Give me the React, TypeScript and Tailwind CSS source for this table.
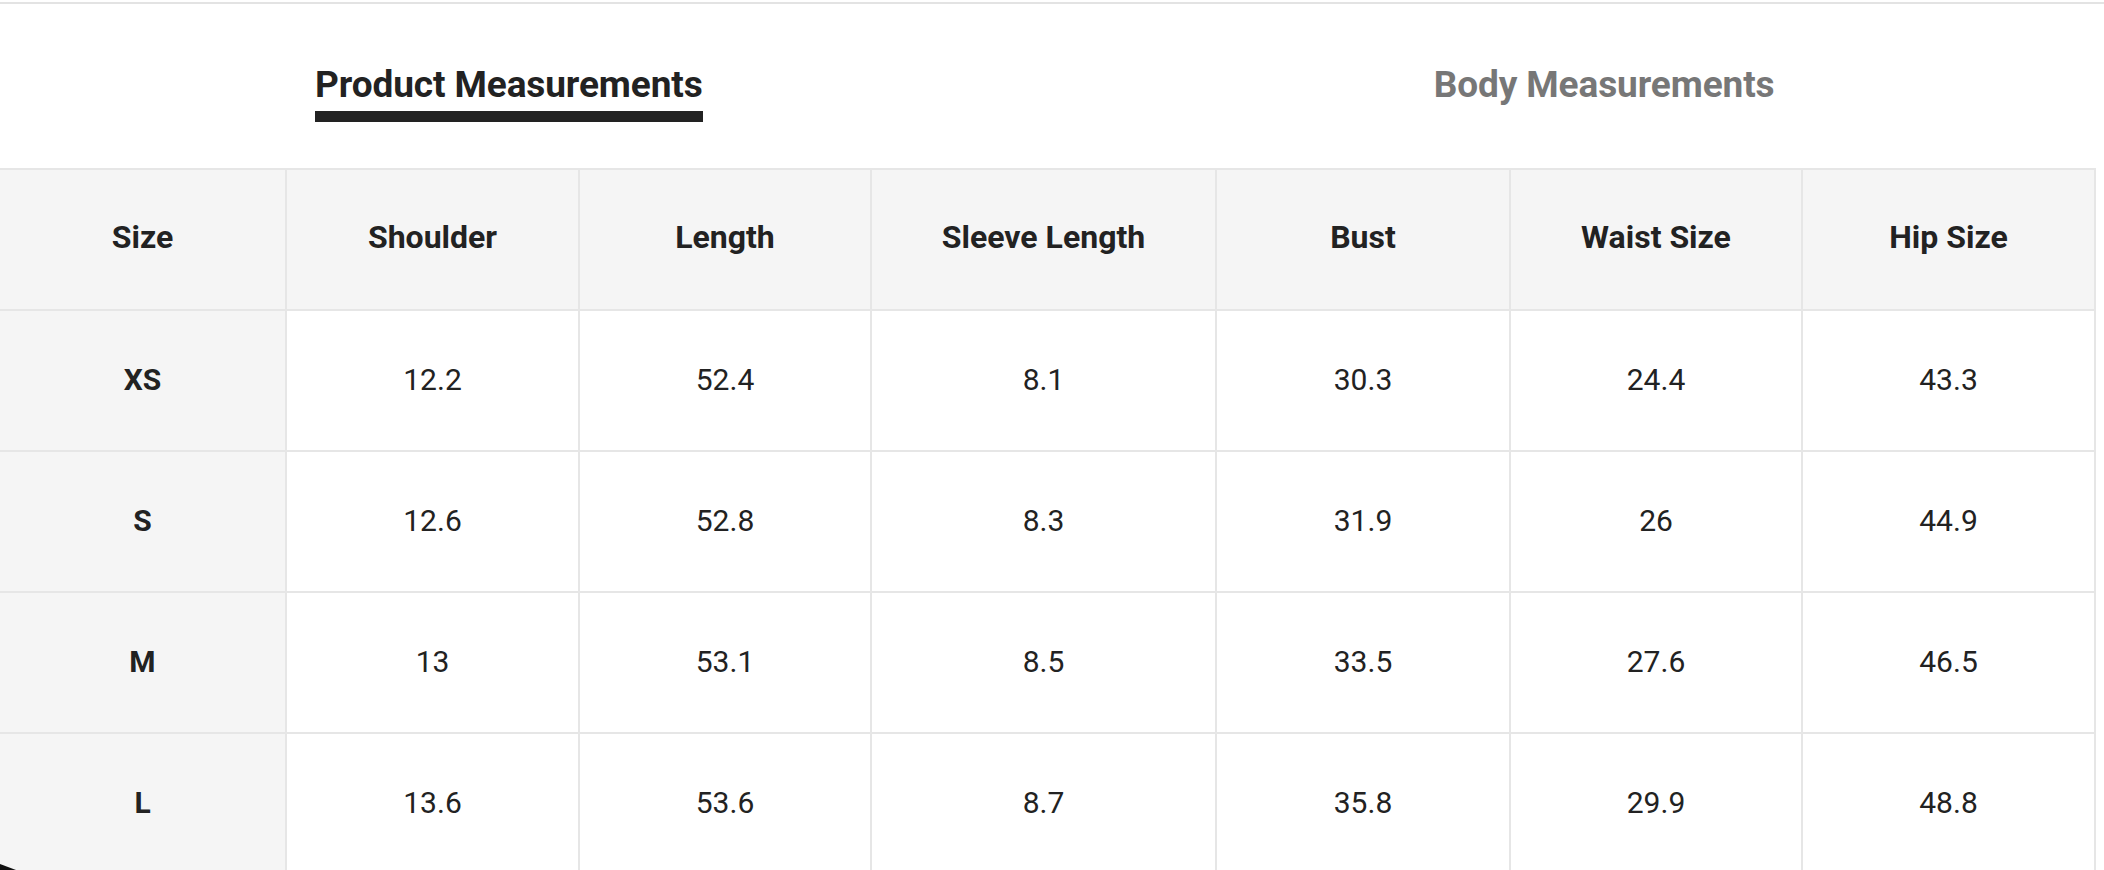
import React from 'react'

const columns = ['Size', 'Shoulder', 'Length', 'Sleeve Length', 'Bust', 'Waist Size', 'Hip Size']

const rows = [
  ['XS', '12.2', '52.4', '8.1', '30.3', '24.4', '43.3'],
  ['S', '12.6', '52.8', '8.3', '31.9', '26', '44.9'],
  ['M', '13', '53.1', '8.5', '33.5', '27.6', '46.5'],
  ['L', '13.6', '53.6', '8.7', '35.8', '29.9', '48.8'],
]

export default function App() {
  return (
    <div
      className="relative w-[2104px] h-[870px] overflow-hidden bg-white text-[#222]"
      style={{ fontFamily: 'Roboto, "Noto Sans", Arial, sans-serif' }}
    >
      {/* top divider */}
      <div className="pt-[2px]">
        <div className="h-[2px] bg-[#e3e3e3]" />
      </div>

      {/* tabs */}
      <div className="flex h-[164px] items-start pt-[60px]">
        <div className="ml-[315px] flex flex-col">
          <span className="text-[37px] leading-[42px] font-bold tracking-[-0.1px]">Product Measurements</span>
          <span className="mt-[5px] h-[11px] bg-[#222]" />
        </div>
        <div className="ml-[731px]">
          <span className="text-[37px] leading-[42px] font-bold tracking-[-0.1px] text-[#777]">Body Measurements</span>
        </div>
      </div>

      {/* table */}
      <div className="w-[2096px] border-t-2 border-[#e6e6e6]">
        <div className="grid grid-cols-[287px_293px_292px_345px_294px_292px_293px]">
          {columns.map((c) => (
            <div
              key={c}
              className="flex h-[141px] items-center justify-center border-r-2 border-b-2 border-[#e6e6e6] bg-[#f5f5f5] pb-[5px] text-[32px] font-bold"
            >
              {c}
            </div>
          ))}
          {rows.map((r) =>
            r.map((v, i) => (
              <div
                key={r[0] + i}
                className={
                  i === 0
                    ? 'flex h-[141px] items-center justify-center border-r-2 border-b-2 border-[#e6e6e6] bg-[#f5f5f5] pb-[2px] text-[30px] font-bold'
                    : 'flex h-[141px] items-center justify-center border-r-2 border-b-2 border-[#e6e6e6] bg-white pb-[2px] text-[30px]'
                }
              >
                {v}
              </div>
            ))
          )}
        </div>
      </div>

      {/* dark corner peeking in bottom-left */}
      <svg className="absolute left-0 bottom-0" width="18" height="8" viewBox="0 0 18 8">
        <path d="M0 2 L16 8 L0 8 Z" fill="#111" />
      </svg>
    </div>
  )
}
